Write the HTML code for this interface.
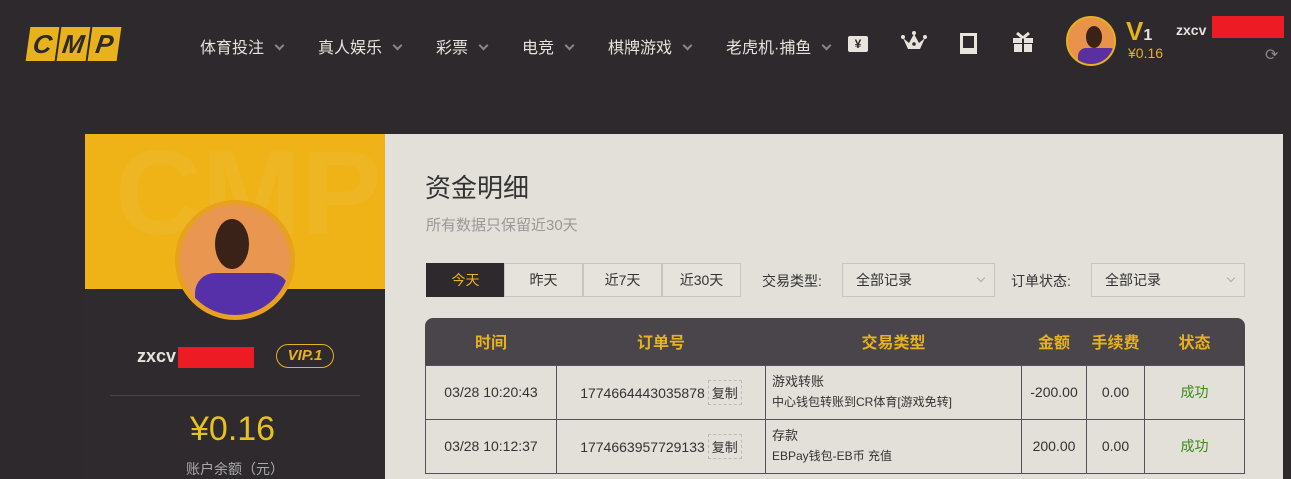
<!DOCTYPE html>
<html><head><meta charset="utf-8"><style>
*{margin:0;padding:0;box-sizing:border-box}
body{width:1291px;height:479px;overflow:hidden;background:#2d292d;font-family:"Liberation Sans","Noto Sans CJK SC",sans-serif;position:relative}
.a{position:absolute}
.nav{color:#e6e2dc;font-size:16px;top:34px}
.chev{display:inline-block;width:7px;height:7px;border-right:2px solid #8a8589;border-bottom:2px solid #8a8589;transform:rotate(45deg);margin-left:12px;vertical-align:4px}
.logo span{display:inline-block;width:29px;height:34px;background:#e8b21c;margin-right:2px;transform:skewX(-8deg);color:#2d292d;font:italic 900 26px/34px "Liberation Sans",sans-serif;text-align:center}
.ic{background:#e8e3dc}
.tab{top:263px;height:34px;width:79px;border:1px solid #c9c4be;text-align:center;line-height:32px;font-size:14px;color:#333;background:#e6e2dc}
.sel{top:263px;height:34px;border:1px solid #c9c4be;background:#e6e2dc;font-size:14px;line-height:32px;padding-left:13px;color:#333}
.sel:after{content:"";position:absolute;right:10px;top:11px;width:5px;height:5px;border-right:1px solid #aaa;border-bottom:1px solid #aaa;transform:rotate(45deg)}
table{border-collapse:collapse;font-size:14px;color:#333}
th{background:#4a454b;color:#e8b21c;height:47px;font-size:16px;font-weight:bold}
td{border:1px solid #55505a;height:54px;text-align:center;background:#e3dfd9}
.cp{display:inline-block;border:1px dashed #bbb;padding:2px 3px;font-size:13px;margin-left:3px}
</style></head><body>
<div class="a logo" style="left:28px;top:27px"><span>C</span><span>M</span><span>P</span></div>
<div class="a nav" style="left:200px">体育投注<i class="chev"></i></div>
<div class="a nav" style="left:318px">真人娱乐<i class="chev"></i></div>
<div class="a nav" style="left:436px">彩票<i class="chev"></i></div>
<div class="a nav" style="left:522px">电竞<i class="chev"></i></div>
<div class="a nav" style="left:608px">棋牌游戏<i class="chev"></i></div>
<div class="a nav" style="left:726px">老虎机·捕鱼<i class="chev"></i></div>
<div class="a ic" style="left:848px;top:36px;width:20px;height:16px;border-radius:2px;color:#2d292d;font-size:12px;text-align:center;line-height:16px;font-weight:bold">¥</div>
<svg class="a" style="left:901px;top:30px" width="26" height="24"><path d="M2 8 L7 19 H19 L24 8 L18 13 L13 4 L8 13 Z" fill="#e8e3dc"/><circle cx="2" cy="7" r="2" fill="#e8e3dc"/><circle cx="24" cy="7" r="2" fill="#e8e3dc"/><circle cx="13" cy="3" r="2" fill="#e8e3dc"/><circle cx="13" cy="14" r="1.8" fill="#2d292d"/></svg>
<div class="a" style="left:960px;top:33px;width:17px;height:21px;border:3px solid #e8e3dc;border-bottom-width:6px"></div>
<svg class="a" style="left:1012px;top:31px" width="22" height="22"><rect x="1" y="7" width="20" height="5" fill="#e8e3dc"/><rect x="2" y="13" width="18" height="8" fill="#e8e3dc"/><rect x="10" y="7" width="2" height="14" fill="#2d292d"/><path d="M11 7 L5 2 M11 7 L17 2" stroke="#e8e3dc" stroke-width="3"/></svg>
<div class="a" style="left:1066px;top:16px;width:50px;height:50px;border-radius:50%;background:#e8924a;border:2px solid #e8b21c;overflow:hidden"><div style="position:absolute;left:10px;top:30px;width:40px;height:20px;background:#5a2fa0;border-radius:8px 8px 0 0"></div><div style="position:absolute;left:18px;top:8px;width:16px;height:22px;background:#3a2218;border-radius:50%"></div></div>
<div class="a" style="left:1126px;top:16px;color:#e8b21c;font-size:26px;font-weight:bold">V<span style="font-size:16px;color:#e6e2dc">1</span></div>
<div class="a" style="left:1128px;top:45px;color:#e8b21c;font-size:14px">¥0.16</div>
<div class="a" style="left:1176px;top:22px;color:#e6e2dc;font-size:14px;font-weight:bold">zxcv</div>
<div class="a" style="left:1212px;top:16px;width:72px;height:22px;background:#ed1c24"></div>
<div class="a" style="left:1265px;top:45px;color:#888;font-size:16px">⟳</div>

<div class="a" style="left:85px;top:134px;width:300px;height:345px;background:#2e2a2e"></div>
<div class="a" style="left:85px;top:134px;width:300px;height:155px;background:#efb318;overflow:hidden"><div style="position:absolute;left:30px;top:-10px;font:bold 120px 'Liberation Sans';color:rgba(255,255,255,0.05)">CMP</div></div>
<div class="a" style="left:175px;top:200px;width:120px;height:120px;border-radius:50%;background:#e8a020;padding:5px"><div style="width:110px;height:110px;border-radius:50%;background:#e99650;position:relative;overflow:hidden"><div style="position:absolute;left:15px;top:68px;width:95px;height:50px;background:#5530a8;border-radius:20px 20px 0 0"></div><div style="position:absolute;left:35px;top:14px;width:34px;height:50px;background:#3a2218;border-radius:50%"></div></div></div>
<div class="a" style="left:137px;top:346px;color:#e6e2dc;font-size:18px;font-weight:bold">zxcv</div>
<div class="a" style="left:178px;top:347px;width:76px;height:21px;background:#ed1c24"></div>
<div class="a" style="left:276px;top:344px;width:58px;height:24px;border:1px solid #e8b21c;border-radius:12px;color:#e8b21c;font:italic bold 15px/22px 'Liberation Sans';text-align:center">VIP.1</div>
<div class="a" style="left:110px;top:395px;width:250px;height:1px;background:#444"></div>
<div class="a" style="left:190px;top:410px;color:#e8c21c;font-size:34px">¥0.16</div>
<div class="a" style="left:186px;top:459px;color:#aaa;font-size:14px">账户余额（元）</div>

<div class="a" style="left:385px;top:134px;width:898px;height:345px;background:#e3dfd9"></div>
<div class="a" style="left:425px;top:168px;font-size:26px;color:#333">资金明细</div>
<div class="a" style="left:426px;top:214px;font-size:15px;color:#999">所有数据只保留近30天</div>
<div class="a tab" style="left:426px;background:#2d292d;color:#e8b21c;border-color:#2d292d">今天</div>
<div class="a tab" style="left:504px">昨天</div>
<div class="a tab" style="left:583px">近7天</div>
<div class="a tab" style="left:662px">近30天</div>
<div class="a" style="left:762px;top:271px;font-size:14px;color:#333">交易类型:</div>
<div class="a sel" style="left:842px;width:153px">全部记录</div>
<div class="a" style="left:1011px;top:271px;font-size:14px;color:#333">订单状态:</div>
<div class="a sel" style="left:1091px;width:154px">全部记录</div>

<div class="a" style="left:425px;top:318px;width:820px;height:48px;background:#4a454b;border-radius:8px 8px 0 0"></div>
<table class="a" style="left:425px;top:318px;width:820px">
<tr><th style="width:131px;background:none">时间</th><th style="width:209px;background:none">订单号</th><th style="width:256px;background:none">交易类型</th><th style="width:65px;background:none">金额</th><th style="width:58px;background:none">手续费</th><th style="background:none">状态</th></tr>
<tr><td>03/28 10:20:43</td><td>1774664443035878<span class="cp">复制</span></td><td style="text-align:left;padding-left:6px;font-size:13px;line-height:20px">游戏转账<br><span style="font-size:12px">中心钱包转账到CR体育[游戏免转]</span></td><td>-200.00</td><td>0.00</td><td style="color:#3a8a1a">成功</td></tr>
<tr><td>03/28 10:12:37</td><td>1774663957729133<span class="cp">复制</span></td><td style="text-align:left;padding-left:6px;font-size:13px;line-height:20px">存款<br><span style="font-size:12px">EBPay钱包-EB币 充值</span></td><td>200.00</td><td>0.00</td><td style="color:#3a8a1a">成功</td></tr>
</table>
</body></html>
